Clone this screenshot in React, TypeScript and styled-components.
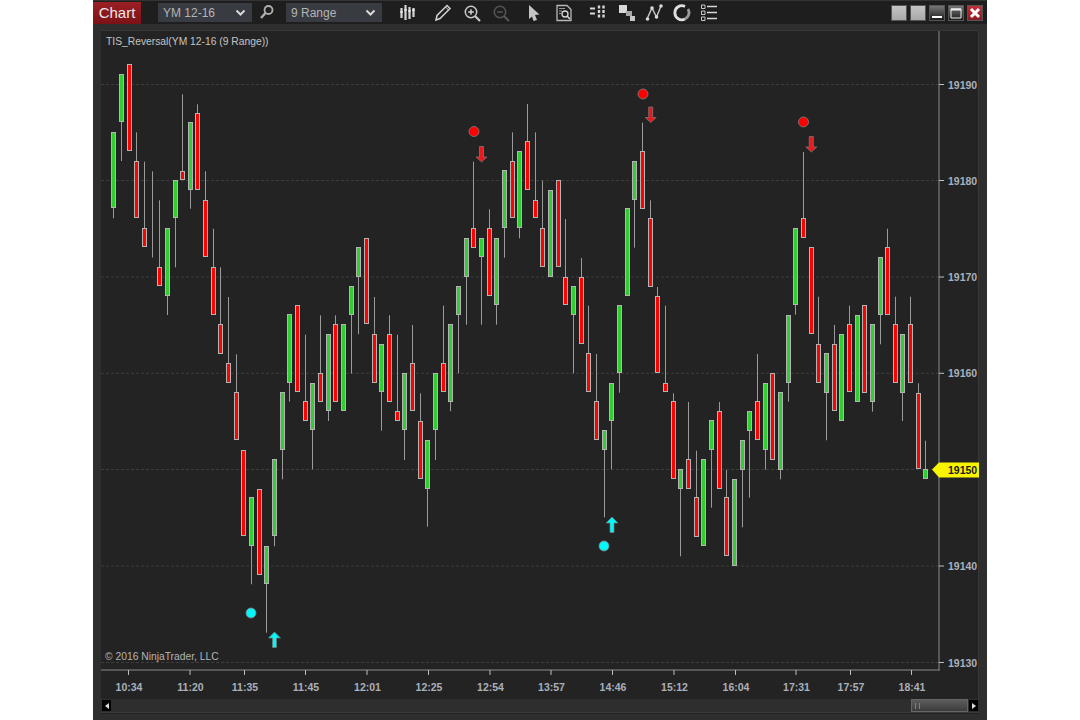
import styled, { createGlobalStyle } from "styled-components";

// [x index is implied] open/top, bottom, wick high, wick low, red?
type Candle = [number, number, number | null, number | null, 0 | 1];

const candles: Candle[] = [
  [131.7, 208.3, null, 218.3, 0], [74.3, 122, null, 161, 0], [64.3, 151.3, null, null, 1],
  [160.7, 218.3, 132.3, null, 1], [228, 247.3, 161.7, null, 1], [257, 258, 171.3, null, 1],
  [267, 286.3, 200.3, null, 1], [228, 296.3, null, 315, 0], [180.3, 218.3, null, 267.3, 0],
  [170.7, 180.3, 94.3, null, 1], [122, 190, null, 208.7, 0], [113.3, 190, 104.3, null, 1],
  [199.7, 257.3, 171.3, null, 1], [267, 314.7, 228.7, null, 1], [324.3, 353.7, 267.3, null, 1],
  [363.3, 383, 297, null, 1], [392.3, 440.3, 354.3, null, 1], [449.7, 536.3, null, null, 1],
  [497.3, 546.3, null, 584.3, 0], [488.7, 575.3, null, null, 1], [546.3, 584.3, null, 632.7, 0],
  [459.3, 536.3, null, 546.3, 0], [392.3, 450, null, 479.3, 0], [314.3, 382.7, null, 401.7, 0],
  [304.7, 392.3, null, null, 1], [401.3, 420.7, 334.7, null, 1], [382.7, 430.3, null, 469.3, 0],
  [373, 401.7, 315.3, null, 1], [334, 411, null, 421, 0], [324.3, 401.7, 315.3, null, 1],
  [324.3, 411, null, null, 0], [286.3, 314.7, null, 373.7, 0], [247.3, 276.7, null, 334.3, 0],
  [237.7, 324.3, null, null, 1], [334, 382.7, 297, null, 1], [343.7, 392.3, null, 430.7, 0],
  [334.3, 401.7, 315.3, null, 1], [411, 420.7, 334.7, null, 1], [373, 430.3, null, 460, 0],
  [363.3, 411, 325, null, 1], [420.7, 479.3, 393.3, null, 1], [440, 489, null, 526.7, 0],
  [373, 430.3, null, 460, 0], [363.3, 392.3, 305.7, null, 1], [324.3, 401.7, null, 411.3, 0],
  [286.3, 315, null, 373.3, 0], [237.7, 276.7, null, 324.7, 0], [228, 247.7, 161.7, null, 1],
  [237.7, 257.3, null, 324.7, 0], [228, 296.3, 209.3, null, 1], [237.7, 305, null, 324.7, 0],
  [170.3, 228.3, null, 257.7, 0], [161, 218.3, 132.3, null, 1], [151, 228.3, null, 238.3, 0],
  [141.3, 190, 104, null, 1], [199.7, 218.3, 132.3, null, 1], [228, 267, 180.7, null, 1],
  [190, 277, null, null, 0], [180.3, 267, null, null, 1], [276.7, 305, 219, null, 1],
  [286.3, 314.7, null, 373.3, 0], [276.7, 344, 258, null, 1], [353.3, 392.3, 305.7, null, 1],
  [401.3, 440.3, 354, null, 1], [430.3, 450, null, 517.3, 0], [382.7, 420.7, null, 469.3, 0],
  [304.7, 373.3, null, 392.7, 0], [208.3, 296.3, null, null, 0], [160.7, 200, null, 247.7, 0],
  [151, 208.7, 122.7, null, 1], [218.3, 286.7, 200.3, null, 1], [296.3, 373.3, 287, null, 1],
  [382.7, 392.3, 305.7, null, 1], [401, 479.3, 393.3, null, 1], [469.3, 489, null, 556.3, 0],
  [459.3, 489, 402, null, 1], [497.3, 536.7, 450.7, null, 1], [459.3, 546.3, null, null, 0],
  [420.3, 450, null, 507.7, 0], [410.7, 489, 402, null, 1], [497.3, 556.3, 470, null, 1],
  [479, 566, null, null, 0], [440, 469.7, null, 527.3, 0], [410.7, 430.7, null, 497.7, 0],
  [401, 440.3, 354, null, 1], [382.7, 450, null, 469.7, 0], [373, 459.7, null, null, 1],
  [392.3, 469.7, null, 479.3, 0], [314.7, 383, null, 401.7, 0], [227.7, 305, null, 314.7, 0],
  [218.3, 238, 152, null, 1], [247.3, 334.3, null, null, 1], [343.7, 382.7, 296.7, null, 1],
  [353.3, 392.7, null, 440.3, 0], [343.7, 411.3, 325, null, 1], [334, 421, null, null, 0],
  [324.3, 392.3, 305.7, null, 1], [314.7, 401.7, null, null, 0], [305, 392.7, null, null, 1],
  [324.3, 401.7, null, 411.7, 0], [257, 314.7, null, 344.3, 0], [247.3, 314.7, 228.7, null, 1],
  [324.3, 383, 296.7, null, 1], [334, 392.7, null, 421, 0], [324.3, 383, 296.7, null, 1],
  [392.7, 469.3, 383.3, null, 1], [469.3, 479, 440.7, null, 0],
];

const priceLevels: [string, number][] = [
  ["19190", 84.5], ["19180", 180.5], ["19170", 277], ["19160", 373.3],
  ["19150", 469.5], ["19140", 566], ["19130", 662.5],
];

const timeLabels: [string, number][] = [
  ["10:34", 128.5], ["11:20", 190], ["11:35", 244.5], ["11:45", 305.5], ["12:01", 367],
  ["12:25", 428.5], ["12:54", 490], ["13:57", 551], ["14:46", 612.5], ["15:12", 674],
  ["16:04", 735.5], ["17:31", 796], ["17:57", 850.5], ["18:41", 911.5],
];

const UP = "#00f8f8";
const DOWN = "#f00";
const ARROW_DOWN = "#e8181c";

const upArrow = (x: number, y: number) => `M${x} ${y} l6 6 h-4 v9.5 h-4 v-9.5 h-4 z`;
const downArrow = (x: number, y: number) => `M${x} ${y} l-5.5 -5 h3.5 v-10.5 h4 v10.5 h3.5 z`;

const GlobalStyle = createGlobalStyle`
  html, body {
    margin: 0;
    background: #fff;
    font-family: "Liberation Sans", Arial, sans-serif;
  }
`;

const Page = styled.div`
  width: 1080px;
  height: 720px;
  display: flex;
  justify-content: center;
  overflow: hidden;
`;

const Window = styled.div`
  width: 894px;
  display: flex;
  flex-direction: column;
  background: #2e2e2e;
`;

const Toolbar = styled.div`
  height: 24px;
  flex: none;
  display: flex;
  align-items: center;
  background: #1e1e1e;
  border-top: 1px solid #333;
  box-sizing: border-box;
`;

const Tab = styled.div`
  width: 48px;
  height: 22px;
  display: flex;
  align-items: center;
  justify-content: center;
  background: linear-gradient(#9a2024, #7c1216);
  color: #e8e8e8;
  font-size: 15px;
`;

const Combo = styled.div<{ $width: number; $gap: number }>`
  width: ${(p) => p.$width}px;
  margin-left: ${(p) => p.$gap}px;
  height: 19px;
  box-sizing: border-box;
  padding: 0 6px 0 5px;
  display: flex;
  align-items: center;
  justify-content: space-between;
  background: #393b42;
  color: #b4b4b4;
  font-size: 12px;
`;

const ToolIcon = styled.svg<{ $gap: number }>`
  width: 20px;
  height: 20px;
  flex: none;
  margin-left: ${(p) => p.$gap}px;
  margin-top: -2px;
`;

const WindowButtons = styled.div`
  margin-left: auto;
  margin-right: 4px;
  display: flex;
  gap: 3px;
`;

const WinButton = styled.div<{ $kind: "plain" | "dark" | "close" }>`
  width: 16px;
  height: 16px;
  box-sizing: border-box;
  display: flex;
  align-items: center;
  justify-content: center;
  border: 1px solid #555;
  background: ${(p) =>
    p.$kind === "plain"
      ? "linear-gradient(#c4c4c4, #a8a8a8)"
      : p.$kind === "dark"
        ? "linear-gradient(#777, #1c1c1c)"
        : "linear-gradient(#c0303a, #8c1a22)"};
`;

const Body = styled.div`
  flex: 1;
  padding: 6px 8px;
  display: flex;
`;

const Panel = styled.div`
  position: relative;
  width: 878px;
  display: flex;
  flex-direction: column;
  background: #232323;
`;

const ChartSvg = styled.svg`
  display: block;
  width: 878px;
  height: 669px;
  flex: none;
`;

const ChartTitle = styled.div`
  position: absolute;
  left: 5px;
  top: 6px;
  color: #c4c4c4;
  font-size: 10.3px;
  line-height: 12px;
`;

const Copyright = styled.div`
  position: absolute;
  left: 4px;
  top: 621px;
  color: #b4b4b4;
  font-size: 10.3px;
  line-height: 12px;
`;

const ScrollBar = styled.div`
  height: 13px;
  flex: none;
  display: flex;
  justify-content: space-between;
  background: #2e2e2e;
  border-bottom: 1px solid #3a3a3a;
`;

const ScrollArrow = styled.div`
  width: 9px;
  height: 11px;
  margin: 1px;
  background: #000;
  display: flex;
  align-items: center;
  justify-content: center;
`;

const ScrollEnd = styled.div`
  display: flex;
`;

const ScrollThumb = styled.div`
  width: 57px;
  box-sizing: border-box;
  display: flex;
  gap: 3px;
  padding: 3px 0 2px 3px;
  background: linear-gradient(#5c5c5c, #3c3c3c);
  border: 1px solid #666;
`;

const Grip = styled.div`
  width: 1px;
  background: #808080;
`;

const ChartDrawing = () => (
  <ChartSvg viewBox="101 30 878 669">
    {priceLevels.map(([, y]) => (
      <line key={y} x1={101} x2={939} y1={y} y2={y} stroke="#3d3d3d" strokeDasharray="3 2" />
    ))}
    {candles.map(([top, bottom, high, low, red], i) => {
      const x = Math.round(113.2 + i * 7.663) + 0.5;
      const y1 = Math.round(top) + 0.5;
      const y2 = Math.round(bottom) - 0.5;
      return (
        <g key={i}>
          <line x1={x} x2={x} y1={high ?? y1} y2={low ?? y2} stroke="#9a9a9a" />
          <rect
            x={x - 2}
            y={y1}
            width={4}
            height={y2 - y1}
            fill={red ? "#ff0000" : "#32cd32"}
            stroke="#b4b4b4"
          />
        </g>
      );
    })}

    <circle cx={251} cy={613} r={5} fill={UP} stroke="#808080" strokeWidth={0.8} />
    <circle cx={604} cy={546} r={5} fill={UP} stroke="#808080" strokeWidth={0.8} />
    <path d={upArrow(274.5, 632)} fill={UP} stroke="#7a7a7a" strokeWidth={0.7} />
    <path d={upArrow(612, 517)} fill={UP} stroke="#7a7a7a" strokeWidth={0.7} />

    <circle cx={474} cy={131.5} r={5} fill={DOWN} stroke="#808080" strokeWidth={0.8} />
    <circle cx={643} cy={94} r={5} fill={DOWN} stroke="#808080" strokeWidth={0.8} />
    <circle cx={803.5} cy={122} r={5} fill={DOWN} stroke="#808080" strokeWidth={0.8} />
    <path d={downArrow(481.5, 162)} fill={ARROW_DOWN} stroke="#808080" strokeWidth={0.7} />
    <path d={downArrow(650.7, 122.5)} fill={ARROW_DOWN} stroke="#808080" strokeWidth={0.7} />
    <path d={downArrow(811.3, 152)} fill={ARROW_DOWN} stroke="#808080" strokeWidth={0.7} />

    <line x1={939} x2={939} y1={30} y2={670.5} stroke="#8c8c8c" />
    <line x1={101} x2={939.5} y1={670} y2={670} stroke="#8c8c8c" />
    <line x1={978.5} x2={978.5} y1={30} y2={699} stroke="#363636" />
    <line x1={101} x2={979} y1={30.5} y2={30.5} stroke="#363636" />

    {priceLevels.map(([label, y]) => (
      <g key={label}>
        <line x1={939} x2={944} y1={y} y2={y} stroke="#bdbdbd" />
        {label !== "19150" && (
          <text x={948} y={y + 4} fill="#aab0ba" fontSize={10.5} fontWeight={700}
            fontFamily="Liberation Sans, Arial, sans-serif">
            {label}
          </text>
        )}
      </g>
    ))}
    <path d="M932 469.5 l7 -7 h40 v15 h-40 z" fill="#f8f400" />
    <text x={948} y={474} fill="#1a1a1a" fontSize={10.5} fontWeight={700}
      fontFamily="Liberation Sans, Arial, sans-serif">
      19150
    </text>

    {timeLabels.map(([label, x]) => (
      <g key={label}>
        <line x1={x} x2={x} y1={670} y2={675} stroke="#bdbdbd" />
        <text x={x + 0.5} y={691} textAnchor="middle" fill="#aab0ba" fontSize={10.5}
          fontWeight={700} fontFamily="Liberation Sans, Arial, sans-serif">
          {label}
        </text>
      </g>
    ))}
  </ChartSvg>
);

const Chevron = () => (
  <svg width="11" height="8" viewBox="0 0 11 8">
    <path d="M1.5 1.5 L5.5 5.5 L9.5 1.5" fill="none" stroke="#d8d8d8" strokeWidth="2" />
  </svg>
);

const App = () => (
  <Page>
    <GlobalStyle />
    <Window>
      <Toolbar>
        <Tab>Chart</Tab>
        <Combo $width={94} $gap={17}>
          YM 12-16
          <Chevron />
        </Combo>
        <ToolIcon $gap={5} viewBox="0 0 20 20">
          <circle cx="11.5" cy="8" r="4" fill="none" stroke="#b0b0b0" strokeWidth="1.8" />
          <path d="M8.5 11 L4 16" stroke="#b0b0b0" strokeWidth="2.4" />
        </ToolIcon>
        <Combo $width={96} $gap={9}>
          9 Range
          <Chevron />
        </Combo>
        <ToolIcon $gap={15} viewBox="0 0 20 20">
          <path d="M4.5 6v10M8.5 3v15M12.5 5v12M16.5 6v9" stroke="#d4d4d4" strokeWidth="2.2" />
          <path d="M3 10h3M7 8h3M11 9h3M15 8h3" stroke="#fff" strokeWidth="1" />
        </ToolIcon>
        <ToolIcon $gap={16} viewBox="0 0 20 20">
          <path d="M3 18 L4 13.5 L14 3.5 L17 6.5 L7 16.5 Z" fill="none" stroke="#d0d0d0" strokeWidth="1.5" />
          <path d="M12.5 5 L15.5 8" stroke="#d0d0d0" />
        </ToolIcon>
        <ToolIcon $gap={9} viewBox="0 0 20 20">
          <circle cx="9" cy="10" r="5.7" fill="none" stroke="#c8c8c8" strokeWidth="1.5" />
          <path d="M6.2 10h5.6M9 7.2v5.6" stroke="#d8d8d8" strokeWidth="1.4" />
          <path d="M13 14 L18 19" stroke="#c8c8c8" strokeWidth="2.2" />
        </ToolIcon>
        <ToolIcon $gap={9} viewBox="0 0 20 20">
          <circle cx="9" cy="10" r="5.7" fill="none" stroke="#555" strokeWidth="1.5" />
          <path d="M6.2 10h5.6" stroke="#5c5c5c" strokeWidth="1.4" />
          <path d="M13 14 L18 19" stroke="#555" strokeWidth="2.2" />
        </ToolIcon>
        <ToolIcon $gap={12} viewBox="0 0 20 20">
          <path d="M6 3 L16.5 12.5 L12 13 L14 18 L10.5 19 L9 14.5 L6 17 Z" fill="#c4c4c4" />
        </ToolIcon>
        <ToolIcon $gap={11} viewBox="0 0 20 20">
          <path d="M3 3.5h10l4 4v11H3z" fill="none" stroke="#b8b8b8" strokeWidth="1.3" />
          <path d="M5 6.5h6M5 9h3M5 11.5h2" stroke="#999" />
          <circle cx="11" cy="12" r="3" fill="none" stroke="#d8d8d8" strokeWidth="1.3" />
          <path d="M13 14 L16 17" stroke="#d8d8d8" strokeWidth="1.6" />
        </ToolIcon>
        <ToolIcon $gap={13} viewBox="0 0 20 20">
          <path d="M12 3.5v13M16.5 3.5v13" stroke="#d8d8d8" strokeWidth="2.4" strokeDasharray="3 1.5" />
          <path d="M3 6.5h5M3 11.5h5" stroke="#d8d8d8" strokeWidth="2.2" />
        </ToolIcon>
        <ToolIcon $gap={9} viewBox="0 0 20 20">
          <rect x="3" y="3" width="8" height="8" fill="#d8d8d8" />
          <rect x="10" y="9" width="6" height="5" fill="#a8a8a8" />
          <rect x="14" y="14" width="5" height="5" fill="#c8c8c8" />
        </ToolIcon>
        <ToolIcon $gap={8} viewBox="0 0 20 20">
          <path d="M3 17 L8 6 L12.5 15 L17 4" fill="none" stroke="#c8c8c8" strokeWidth="1.4" />
          <circle cx="3.5" cy="17" r="1.8" fill="#d8d8d8" />
          <circle cx="8" cy="6" r="1.8" fill="#d8d8d8" />
          <circle cx="12.5" cy="15" r="1.8" fill="#d8d8d8" />
          <circle cx="17" cy="4" r="1.8" fill="#d8d8d8" />
        </ToolIcon>
        <ToolIcon $gap={8} viewBox="0 0 20 20">
          <path d="M13 4.5 A7 7 0 1 0 13 17" fill="none" stroke="#e0e0e0" strokeWidth="2.8" />
          <path d="M13 17 A7 7 0 0 0 16 7" fill="none" stroke="#9a9a9a" strokeWidth="2.8" />
        </ToolIcon>
        <ToolIcon $gap={7} viewBox="0 0 20 20">
          <path d="M2.5 3h3.5v3.5H2.5zM2.5 9h3.5v3.5H2.5zM2.5 15h3.5v3.5H2.5z" fill="none" stroke="#c8c8c8" />
          <path d="M8 4.5h10M8 10.5h10M8 16.5h10" stroke="#d8d8d8" strokeWidth="1.6" />
        </ToolIcon>
        <WindowButtons>
          <WinButton $kind="plain" />
          <WinButton $kind="plain" />
          <WinButton $kind="dark">
            <svg width="12" height="12" viewBox="0 0 12 12">
              <path d="M1 10h10" stroke="#fff" strokeWidth="2" />
            </svg>
          </WinButton>
          <WinButton $kind="dark">
            <svg width="12" height="12" viewBox="0 0 12 12">
              <path d="M1 2h10v9H1z" fill="none" stroke="#eee" />
              <path d="M1 2.5h10" stroke="#eee" strokeWidth="2" />
            </svg>
          </WinButton>
          <WinButton $kind="close">
            <svg width="12" height="12" viewBox="0 0 12 12">
              <path d="M2 2 L10 10 M10 2 L2 10" stroke="#fff" strokeWidth="3" />
            </svg>
          </WinButton>
        </WindowButtons>
      </Toolbar>
      <Body>
        <Panel>
          <ChartDrawing />
          <ChartTitle>TIS_Reversal(YM 12-16 (9 Range))</ChartTitle>
          <Copyright>© 2016 NinjaTrader, LLC</Copyright>
          <ScrollBar>
            <ScrollArrow>
              <svg width="4" height="6" viewBox="0 0 4 6">
                <path d="M4 0v6L0 3z" fill="#ddd" />
              </svg>
            </ScrollArrow>
            <ScrollEnd>
              <ScrollThumb>
                <Grip />
                <Grip />
              </ScrollThumb>
              <ScrollArrow>
                <svg width="4" height="6" viewBox="0 0 4 6">
                  <path d="M0 0v6L4 3z" fill="#ddd" />
                </svg>
              </ScrollArrow>
            </ScrollEnd>
          </ScrollBar>
        </Panel>
      </Body>
    </Window>
  </Page>
);

export default App;
